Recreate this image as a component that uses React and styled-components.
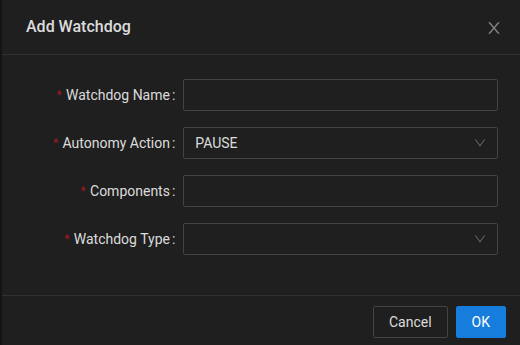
import React from "react";
import styled, { createGlobalStyle } from "styled-components";

const Global = createGlobalStyle`
  html, body { margin: 0; padding: 0; background: #141414; }
  body { font-family: Roboto, "Liberation Sans", sans-serif; font-size: 14px; }
  * { box-sizing: border-box; }
`;

const Page = styled.div`
  padding-left: 2px;
  height: 345px;
  overflow: hidden;
`;

const Modal = styled.div`
  width: 520px;
  background: #1f1f1f;
  display: flex;
  flex-direction: column;
`;

const Header = styled.div`
  position: relative;
  padding: 16px 24px;
  border-bottom: 1px solid #303030;
`;

const Title = styled.div`
  font-size: 16px;
  line-height: 22px;
  font-weight: 500;
  color: rgba(255, 255, 255, 0.85);
`;

const Close = styled.button`
  position: absolute;
  top: 0;
  right: 0;
  width: 56px;
  height: 56px;
  border: 0;
  background: transparent;
  padding: 0;
  display: flex;
  align-items: center;
  justify-content: center;
  color: rgba(255, 255, 255, 0.45);
  cursor: pointer;
`;

const Body = styled.div`
  padding: 24px 24px 40px;
  display: flex;
  flex-direction: column;
  gap: 16px;
`;

const Row = styled.div`
  display: grid;
  grid-template-columns: 8fr 16fr;
  align-items: center;
`;

const Label = styled.label`
  display: flex;
  justify-content: flex-end;
  align-items: center;
  height: 32px;
  color: rgba(255, 255, 255, 0.85);
  font-size: 14px;
  white-space: nowrap;
  &::after {
    content: ":";
    margin: 0 8px 0 2px;
    position: relative;
    top: -0.5px;
  }
`;

const Star = styled.span`
  color: #a61d24;
  font-family: SimSun, sans-serif;
  font-size: 14px;
  line-height: 1;
  margin-right: 4px;
`;

const Field = styled.div`
  height: 32px;
  border: 1px solid #434343;
  border-radius: 2px;
  padding: 0 11px;
  display: flex;
  align-items: center;
  justify-content: space-between;
  color: rgba(255, 255, 255, 0.85);
  font-size: 14px;
`;

const Arrow = styled.span`
  display: flex;
  color: rgba(255, 255, 255, 0.3);
`;

const Footer = styled.div`
  border-top: 1px solid #303030;
  padding: 10px 16px;
  display: flex;
  justify-content: flex-end;
  gap: 8px;
`;

const Button = styled.button`
  height: 32px;
  padding: 4px 15px;
  font-family: Roboto, "Liberation Sans", sans-serif;
  font-size: 14px;
  border-radius: 2px;
  border: 1px solid ${(p) => (p.$primary ? "#177ddc" : "#434343")};
  background: ${(p) => (p.$primary ? "#177ddc" : "transparent")};
  color: ${(p) => (p.$primary ? "#fff" : "rgba(255,255,255,0.85)")};
`;

const Down = () => (
  <svg viewBox="64 64 896 896" width="12" height="12" fill="currentColor">
    <path d="M884 256h-75c-5.1 0-9.9 2.5-12.9 6.6L512 654.2 227.9 262.6c-3-4.1-7.8-6.6-12.9-6.6h-75c-6.5 0-10.3 7.4-6.5 12.7l352.6 486.1c12.8 17.6 39 17.6 51.7 0l352.6-486.1c3.9-5.3.1-12.7-6.4-12.7z" />
  </svg>
);

const X = () => (
  <svg viewBox="64 64 896 896" width="16" height="16" fill="currentColor">
    <path
      fillRule="evenodd"
      d="M563.8 512l262.5-312.9c4.4-5.2.7-13.1-6.1-13.1h-79.8c-4.7 0-9.2 2.1-12.3 5.7L511.6 449.8 295.1 191.7c-3-3.6-7.5-5.7-12.3-5.7H203c-6.8 0-10.5 7.9-6.1 13.1L459.4 512 196.9 824.9A7.95 7.95 0 00203 838h79.8c4.7 0 9.2-2.1 12.3-5.7l216.5-258.1 216.5 258.1c3 3.6 7.5 5.7 12.3 5.7h79.8c6.8 0 10.5-7.9 6.1-13.1L563.8 512z"
    />
  </svg>
);

const rows = [
  { label: "Watchdog Name", value: "", select: false },
  { label: "Autonomy Action", value: "PAUSE", select: true },
  { label: "Components", value: "", select: false },
  { label: "Watchdog Type", value: "", select: true },
];

export default function App() {
  return (
    <Page>
      <Global />
      <Modal>
        <Header>
          <Title>Add Watchdog</Title>
          <Close aria-label="Close">
            <X />
          </Close>
        </Header>
        <Body>
          {rows.map((r) => (
            <Row key={r.label}>
              <Label>
                <Star>*</Star>
                {r.label}
              </Label>
              <Field>
                <span>{r.value}</span>
                {r.select && (
                  <Arrow>
                    <Down />
                  </Arrow>
                )}
              </Field>
            </Row>
          ))}
        </Body>
        <Footer>
          <Button>Cancel</Button>
          <Button $primary>OK</Button>
        </Footer>
      </Modal>
    </Page>
  );
}
